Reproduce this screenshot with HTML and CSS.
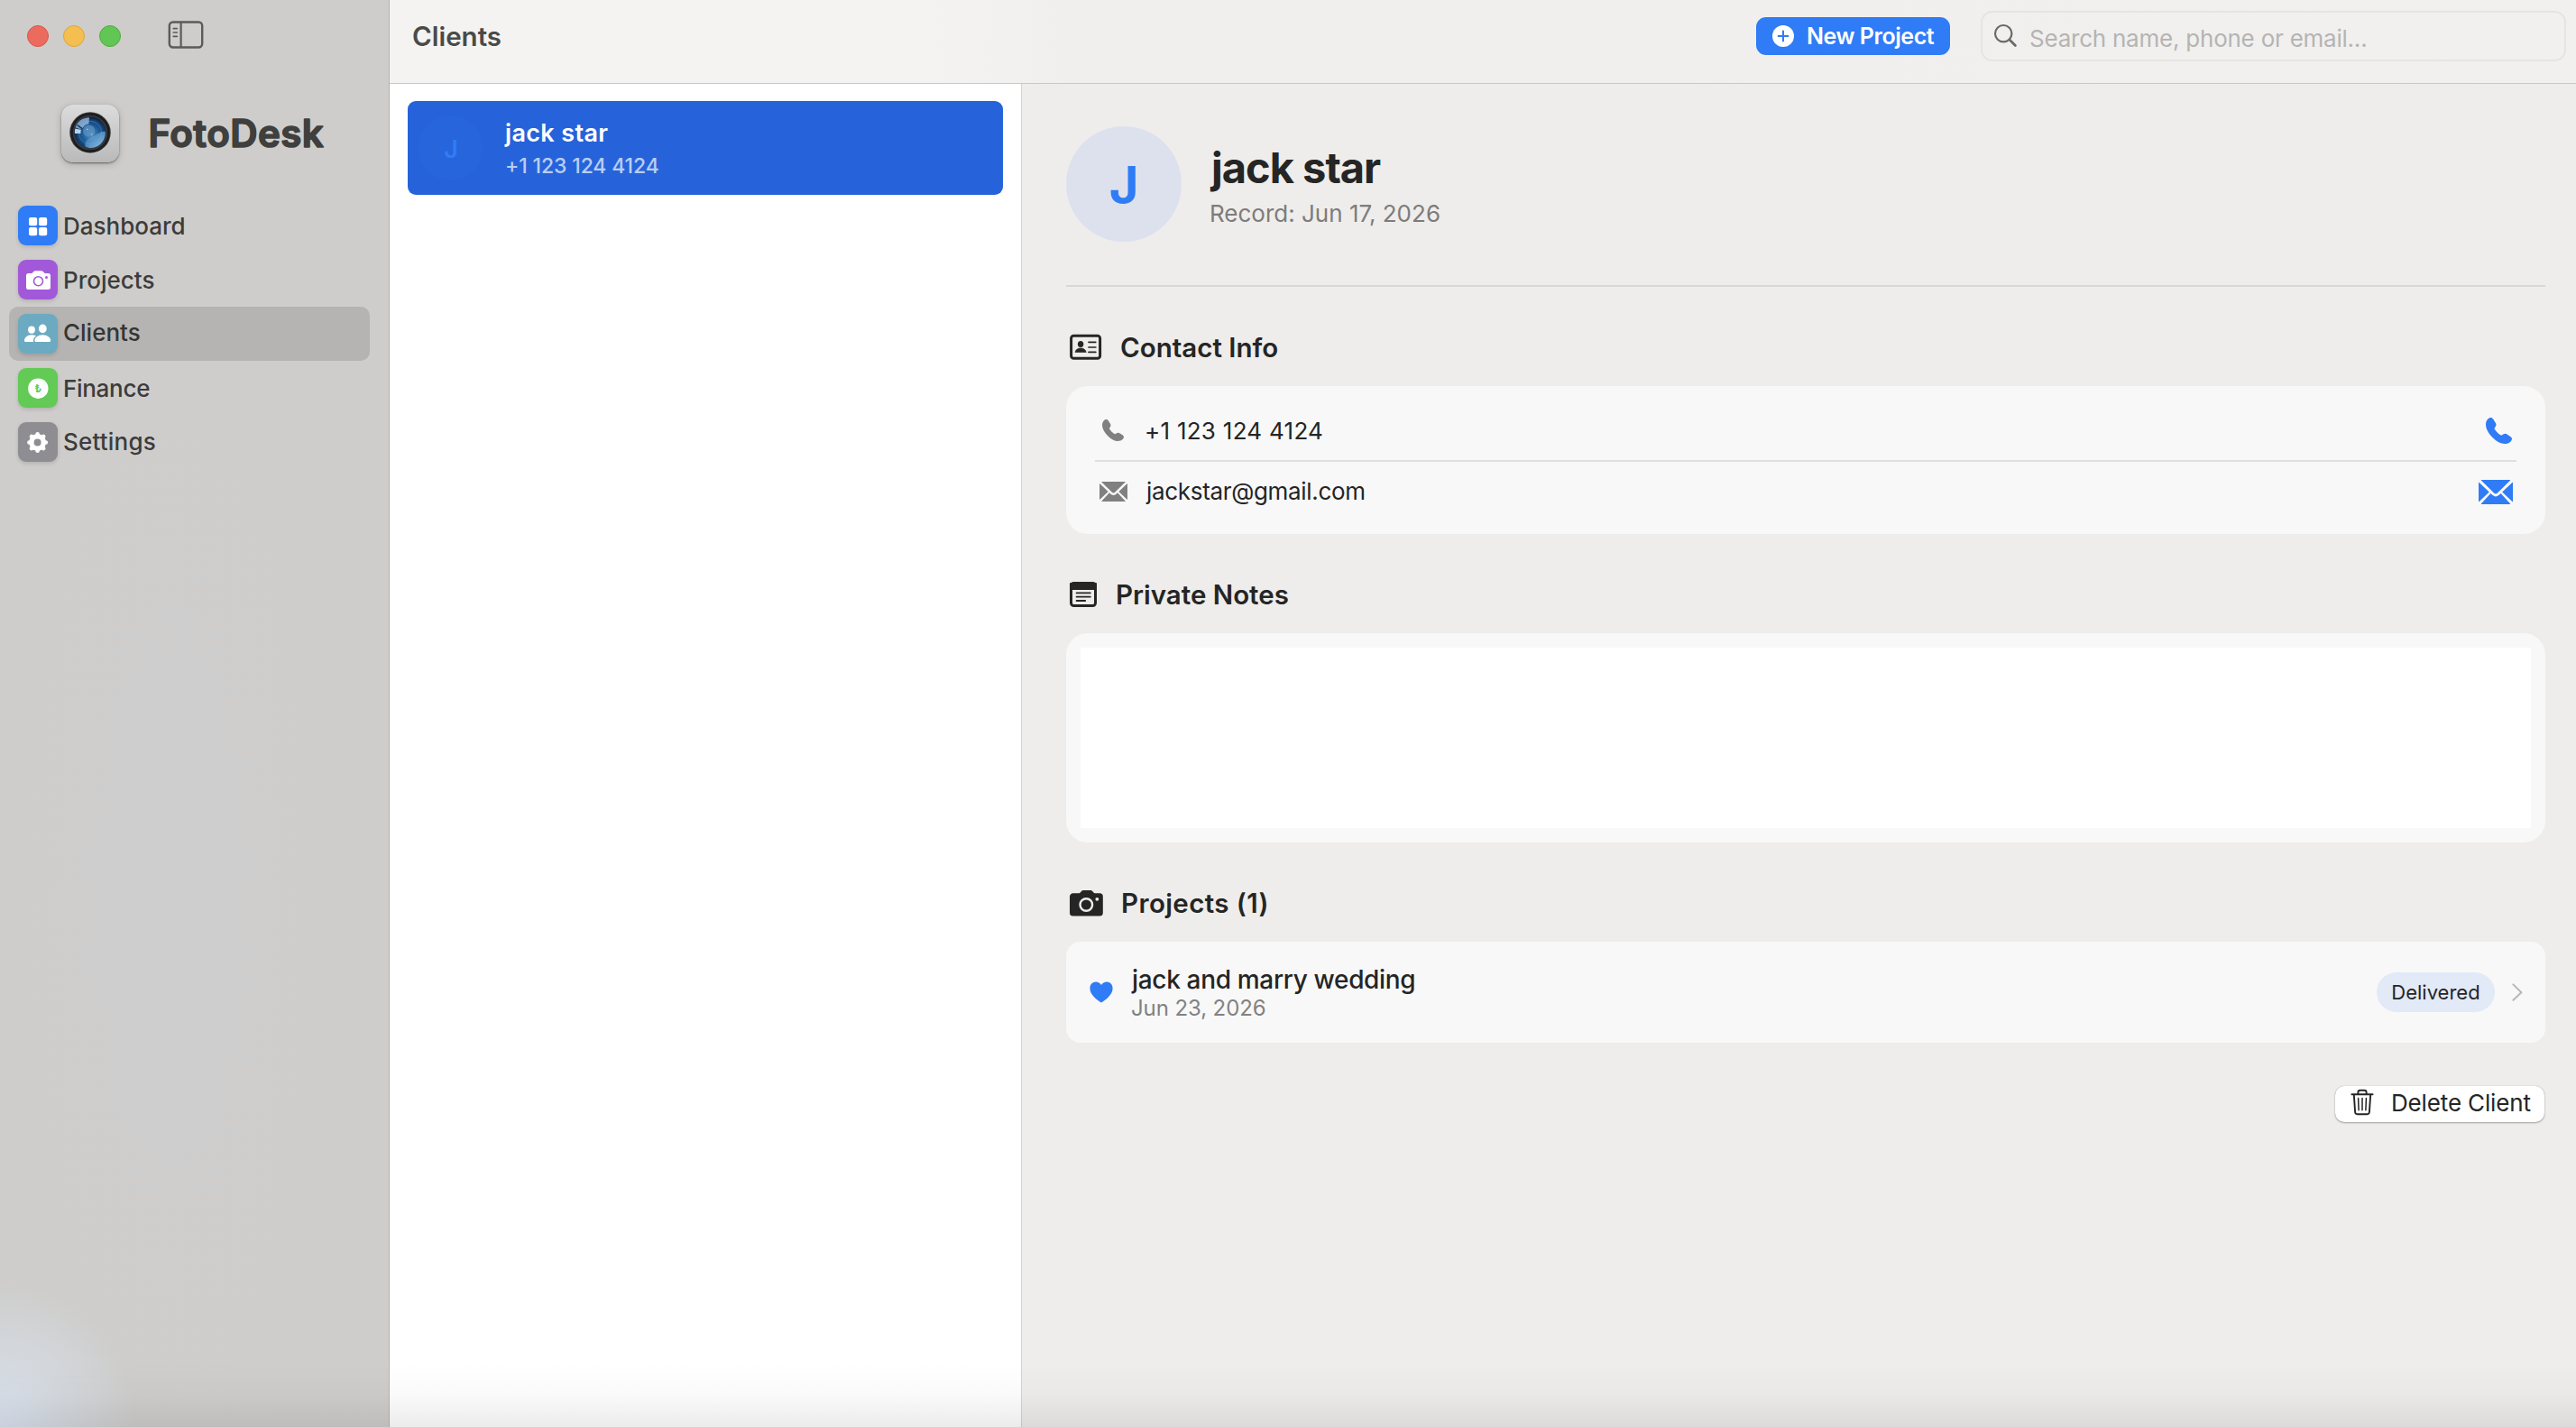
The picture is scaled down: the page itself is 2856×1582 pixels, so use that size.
FILE: index.html
```html
<!DOCTYPE html>
<html lang="en">
<head>
<meta charset="utf-8">
<title>FotoDesk</title>
<link rel="stylesheet" href="styles.css">
</head>
<body>
<div class="window">
  <aside class="sidebar">
    <div class="titlebar">
      <span class="light light-close"></span>
      <span class="light light-min"></span>
      <span class="light light-zoom"></span>
      <svg class="toggle" viewBox="0 0 40 32" width="40" height="32" fill="none" stroke="#5b5b5a" stroke-linecap="round">
        <rect x="1.8" y="1.5" width="36.4" height="28" rx="4" stroke-width="2.4"/>
        <path d="M14.6 2v27" stroke-width="2.2"/>
        <path d="M6.2 8.6h4.2M6.2 13h4.2M6.2 17.4h4.2" stroke-width="1.6"/>
      </svg>
    </div>
    <div class="brand">
      <svg class="brand-icon" viewBox="0 0 64 64" width="64" height="64">
        <defs>
          <linearGradient id="body" x1="0" y1="0" x2="0" y2="1"><stop offset="0" stop-color="#dcdcdc"/><stop offset="1" stop-color="#b9b9b9"/></linearGradient>
          <radialGradient id="lens" cx=".52" cy=".55" r=".55"><stop offset="0" stop-color="#4f93cc"/><stop offset=".5" stop-color="#1f5c98"/><stop offset=".8" stop-color="#123f70"/><stop offset="1" stop-color="#0a1c33"/></radialGradient>
          <linearGradient id="glow" x1="0" y1="0" x2="1" y2="1"><stop offset="0" stop-color="#4e8fc4" stop-opacity=".3"/><stop offset="1" stop-color="#a5d8f8"/></linearGradient>
        </defs>
        <rect width="64" height="64" rx="13" fill="url(#body)"/>
        <circle cx="32" cy="31.4" r="22.8" fill="#e4e4e4"/>
        <circle cx="32" cy="31" r="22.8" fill="#3a3a3b"/>
        <circle cx="32" cy="31" r="20.5" fill="none" stroke="#1c1c1e" stroke-width="2.4"/>
        <circle cx="32" cy="31" r="17.6" fill="url(#lens)"/>
        <circle cx="32" cy="31" r="12.6" fill="none" stroke="#3a78b0" stroke-width="1.2" opacity=".7"/>
        <path d="M15.600 25.400C18 18.400 23 14.600 31 14.200l-.6 7.200c-3.400.4-6 2.400-7.400 6Z" fill="#8fb4d8" opacity=".85"/>
        <path d="M15 32c-.4-2 0-4 .4-5.400l6.600 1.400c-.6 1.600-.6 2.600-.4 4Z" fill="#b8d2ea"/>
        <path d="M17.600 22.600l6 4.400" stroke="#14406c" stroke-width="1.600"/>
        <circle cx="30.600" cy="29" r="6.600" fill="#5c90be" opacity=".75"/>
        <path d="M48.800 30c.6 9-6 17.600-15.800 18-2.600 0-4.600-.6-6.600-1.800-1-6.800 4.400-9.400 9.400-11.400 4.400-1.800 7.600-6 13-4.800Z" fill="url(#glow)"/>
        <circle cx="28.800" cy="27.400" r=".9" fill="#d9a6c0"/><circle cx="34" cy="33" r=".8" fill="#a9cdf0"/>
      </svg>
      <svg class="brand-name" width="200" height="50"><text x="0.500" y="40.200">FotoDesk</text></svg>
    </div>
    <nav class="nav">
      <a class="nav-row nav-dashboard">
        <span class="tile"><svg viewBox="0 0 44 44"><g fill="#fff"><rect x="12" y="13" width="9.200" height="9.200" rx="2"/><rect x="23" y="13" width="9.200" height="9.200" rx="2"/><rect x="12" y="24" width="9.200" height="9.200" rx="2"/><rect x="23" y="24" width="9.200" height="9.200" rx="2"/></g></svg></span>
        <span class="nav-label">Dashboard</span>
      </a>
      <a class="nav-row nav-projects">
        <span class="tile"><svg viewBox="0 0 44 44"><path fill="#fff" d="M11.500 15h3.200c.8 0 1.200-.3 1.700-.9l.9-1c.5-.6 1-.9 1.900-.9h6.600c.9 0 1.400.3 1.900.9l.9 1c.5.6.9.9 1.700.9h3.200a2.500 2.500 0 0 1 2.500 2.500V30.500a2.500 2.500 0 0 1-2.500 2.500h-22a2.500 2.500 0 0 1-2.500-2.500V17.500a2.500 2.500 0 0 1 2.500-2.500Z"/><circle cx="22.500" cy="23.700" r="5" fill="none" stroke="#a259d9" stroke-width="1.600"/><circle cx="31.500" cy="19.500" r="1.500" fill="#a259d9"/></svg></span>
        <span class="nav-label">Projects</span>
      </a>
      <a class="nav-row nav-clients">
        <span class="tile"><svg viewBox="0 0 44 44" fill="#fff"><ellipse cx="15" cy="17.600" rx="3.900" ry="4.200"/><ellipse cx="27.300" cy="16.400" rx="4.400" ry="4.800"/><path d="M20 24.300c-1.500-.6-3.200-1-5-1-5 0-8 3.200-8 6.100 0 1 .6 1.700 1.800 1.700h8.300c-.6-2.600.5-5 2.900-6.800Z"/><path d="M27.300 23.300c5.300 0 8.900 3.400 8.900 6.300 0 .9-.6 1.500-1.700 1.500H20.100c-1.100 0-1.700-.6-1.700-1.500 0-2.900 3.600-6.300 8.900-6.300Z"/></svg></span>
        <span class="nav-label">Clients</span>
      </a>
      <a class="nav-row nav-finance">
        <span class="tile"><svg viewBox="0 0 44 44"><circle cx="22.300" cy="22.700" r="11.200" fill="#fff"/><text class="coin" x="22.300" y="27" text-anchor="middle">₺</text></svg></span>
        <span class="nav-label">Finance</span>
      </a>
      <a class="nav-row nav-settings">
        <span class="tile"><svg viewBox="0 0 44 44"><g transform="translate(21.600 22.500)"><circle r="6.700" fill="none" stroke="#fff" stroke-width="5.400"/><g stroke="#fff" stroke-width="4.600" stroke-linecap="round"><path d="M0-8.500V-9.200M0 8.500V9.200M8.500 0H9.200M-8.500 0H-9.200M6 6l.6.6M-6-6l-.6-.6M6-6l.6-.6M-6 6l-.6.6"/></g></g></svg></span>
        <span class="nav-label">Settings</span>
      </a>
    </nav>
  </aside>
  <main class="main">
    <header class="toolbar">
      <h1 class="toolbar-title">Clients</h1>
      <button class="new-project">
        <svg width="24" height="24" viewBox="0 0 24 24"><circle cx="12" cy="12" r="12" fill="#fff"/><path d="M12 6.600v10.800M6.600 12h10.800" stroke="#2f7cf6" stroke-width="2" stroke-linecap="round"/></svg>
        <span class="new-label">New Project</span>
      </button>
      <div class="search">
        <svg width="28" height="28" viewBox="0 0 28 28" fill="none" stroke="#6b6a69" stroke-linecap="round"><circle cx="11.200" cy="11.200" r="9.200" stroke-width="2.200"/><path d="M18 18l6.400 6.400" stroke-width="2.800"/></svg>
        <span class="search-label">Search name, phone or email...</span>
      </div>
    </header>
    <div class="panes">
      <section class="list">
        <article class="client">
          <span class="client-avatar">J</span>
          <div class="client-text">
            <span class="client-name">jack star</span>
            <span class="client-phone">+1 123 124 4124</span>
          </div>
        </article>
      </section>
      <section class="detail">
        <div class="profile">
          <span class="profile-avatar">J</span>
          <div class="profile-text">
            <h2 class="profile-name">jack star</h2>
            <span class="profile-record">Record: Jun 17, 2026</span>
          </div>
        </div>
        <hr class="rule">
        <h3 class="heading">
          <svg width="36" height="30" viewBox="0 0 36 30"><rect x="1.600" y="2.300" width="32" height="25" rx="2.800" fill="none" stroke="#252525" stroke-width="3"/><ellipse cx="12.100" cy="11.500" rx="3.200" ry="3.500" fill="#252525"/><path d="M6 20.500c.5-3 3-4.600 6.100-4.600s5.600 1.600 6.100 4.600Z" fill="#252525" stroke="#252525" stroke-width=".6" stroke-linejoin="round"/><path d="M21 9.300h7.800M21 15h7.800M21 20.400h7.800" stroke="#252525" stroke-width="1.700" stroke-linecap="round"/></svg>
          <span class="h-contact">Contact Info</span>
        </h3>
        <div class="card contact">
          <div class="contact-row">
            <span class="contact-icon"><svg width="24" height="24" viewBox="0 0 24 24"><use href="#phone"/></svg></span>
            <span class="contact-phone">+1 123 124 4124</span>
            <svg class="action-phone" width="29" height="29" viewBox="0 0 24 24"><use href="#phone"/></svg>
          </div>
          <div class="contact-row">
            <span class="contact-icon"><svg width="31" height="22" viewBox="0 0 38 27"><use href="#mail"/></svg></span>
            <span class="contact-mail">jackstar@gmail.com</span>
            <svg class="action-mail" width="38" height="27" viewBox="0 0 38 27"><use href="#mail"/></svg>
          </div>
        </div>
        <h3 class="heading">
          <svg width="31" height="30" viewBox="0 0 31 30"><rect x="1.500" y="2.500" width="27" height="25" rx="3" fill="none" stroke="#252525" stroke-width="3"/><path d="M1 3h28v6H1Z" fill="#252525" stroke="#252525" stroke-width="2" stroke-linejoin="round"/><path d="M7.600 13.400h15.200M7.600 17.700h15.200M7.600 22h9.600" stroke="#252525" stroke-width="1.800" stroke-linecap="round"/></svg>
          <span class="h-notes">Private Notes</span>
        </h3>
        <div class="card notes"><div class="notes-field"></div></div>
        <h3 class="heading">
          <svg width="37" height="30" viewBox="0 0 37 30"><path fill="#252525" d="M4 4.300h6c.9 0 1.300-.3 1.900-1l.9-1C13.500 1.500 14.300 1 15.500 1h7.200c1.200 0 2 .5 2.700 1.300l.9 1c.6.700 1 1 1.900 1h5a3.600 3.600 0 0 1 3.600 3.600V26a3.600 3.600 0 0 1-3.600 3.600H3.600A3.600 3.600 0 0 1 0 26V8a3.700 3.700 0 0 1 4-3.700Z"/><circle cx="18.300" cy="17" r="6.800" fill="none" stroke="#eeedeb" stroke-width="2.400"/><circle cx="30.300" cy="10.800" r="1.900" fill="#eeedeb"/></svg>
          <span class="h-projects">Projects (1)</span>
        </h3>
        <div class="card project">
          <svg class="heart" width="26" height="24" viewBox="0 0 26 24"><path fill="#2f7cf6" d="M13 23.600C9 21.200.4 15.200.4 7.800.4 3.600 3.200.6 6.900.6c2.600 0 4.800 1.300 6.100 3.500C14.300 1.900 16.500.6 19.100.6c3.700 0 6.500 3 6.500 7.200 0 7.400-8.600 13.400-12.600 15.800Z"/></svg>
          <div class="project-text">
            <span class="project-name">jack and marry wedding</span>
            <span class="project-date">Jun 23, 2026</span>
          </div>
          <span class="status"><span class="status-label">Delivered</span></span>
          <svg class="chevron" width="12" height="22" viewBox="0 0 12 22" fill="none" stroke="#b7b7b7" stroke-width="2" stroke-linecap="round" stroke-linejoin="round"><path d="M1.400 2.400l9 8.800-9 8.600"/></svg>
        </div>
        <button class="delete">
          <svg width="26" height="30" viewBox="0 0 26 30" fill="none" stroke="#252525" stroke-width="1.900" stroke-linecap="round" stroke-linejoin="round"><path d="M1.400 6.200h23.200M8.400 6V4c0-1.400.8-2.300 2.200-2.300h4.800c1.400 0 2.200.9 2.200 2.300v2M3.800 6.400l1.300 19.400c.1 1.500 1 2.400 2.500 2.400h10.800c1.500 0 2.400-.9 2.500-2.400l1.300-19.400"/><path d="M8.600 10.600l.5 13.200M13 10.600v13.200M17.400 10.600l-.5 13.200" stroke-width="1.500"/></svg>
          <span class="delete-label">Delete Client</span>
        </button>
      </section>
    </div>
  </main>
</div>
<svg class="symbols" aria-hidden="true">
  <symbol id="phone" viewBox="0 0 24 24"><path fill="currentColor" d="M17.300 24c2.200 0 3.900-.4 5.300-1.900.8-.8 1.400-1.800 1.400-2.600 0-.8-.4-1.300-1.200-1.900l-3-2.100c-1.300-.9-2.500-.9-3.500-.3l-1.700.9c-.4.200-.7.100-1.100-.1-2.300-1.500-4.200-3.500-5.400-5.500-.2-.4-.2-.7 0-1l1-1.600c.7-1.100.5-2.200-.3-3.400L6.700 1.300C6.100.5 5.500 0 4.600 0 3.600 0 2.600.5 1.800 1.400.5 2.800 0 4.300 0 6.200c0 3.900 2.400 8.300 6.200 12 3.600 3.600 7.500 5.800 11.100 5.800Z"/></symbol>
  <symbol id="mail" viewBox="0 0 38 27"><path fill="currentColor" d="M2.600.3C3 .1 3.500 0 4.200 0h29.600c.7 0 1.200.1 1.600.3L21 14.400c-1.300 1.200-2.700 1.200-4 0ZM.2 2.400C.1 2.800 0 3.300 0 4v19c0 .7.1 1.200.2 1.600L11.800 13.500ZM37.800 2.400c.1.400.2.900.2 1.600v19c0 .7-.1 1.200-.2 1.600L26.200 13.500ZM2.600 26.700c.4.200.9.300 1.600.3h29.600c.7 0 1.200-.1 1.600-.3L24.600 15l-2.300 2.100c-2.200 1.900-4.400 1.900-6.600 0L13.400 15Z"/></symbol>
</svg>
</body>
</html>
```
FILE: styles.css
```css
* { box-sizing: border-box; }
body { margin: 0; font-family: Inter, "Liberation Sans", sans-serif; color: #252525; }
h1, h2, h3 { margin: 0; }
button { font: inherit; border: 0; margin: 0; }
svg { display: block; flex: none; }
span { white-space: nowrap; }
.symbols { display: none; }

.window { position: relative; display: flex; width: 2856px; height: 1582px; overflow: hidden; }
.window::after {
  content: ""; position: absolute; left: 0; right: 0; bottom: 0; height: 72px; pointer-events: none;
  background: linear-gradient(to bottom, rgba(0,0,0,0), rgba(0,0,0,.02) 50%, rgba(0,0,0,.08));
}

/* Sidebar */
.sidebar {
  width: 432px; flex: none; border-right: 1px solid #b3b2b1;
  background:
    radial-gradient(ellipse 150px 160px at 0 100%, #dae3f0, rgba(208,216,228,0)),
    radial-gradient(ellipse 200px 700px at 190px 1000px, rgba(207,206,210,.5), rgba(206,205,207,0)),
    #cecdcb;
}
.titlebar { display: flex; align-items: center; height: 80px; padding-left: 30px; gap: 16px; }
.light { width: 24px; height: 24px; border-radius: 50%; border: 1px solid; }
.light-close { background: #ec6b5f; border-color: #d9564b; }
.light-min { background: #f4bf50; border-color: #dfa33c; }
.light-zoom { background: #62c655; border-color: #51ab43; }
.toggle { margin: -2px 0 0 36px; }
.brand { display: flex; align-items: center; height: 64px; margin-top: 36px; padding-left: 68px; gap: 32px; }
.brand-icon { border-radius: 13px; box-shadow: 0 1px 2px rgba(0,0,0,.45), 0 2px 8px rgba(0,0,0,.18); }
.brand-name { overflow: visible; }
.brand-name text { font-weight: 600; font-size: 42px; letter-spacing: .45px; fill: #3f3f3e; stroke: #3f3f3e; stroke-width: 1.600px; stroke-linejoin: round; }
.nav { margin-top: 40px; padding: 0 21px 0 10px; }
.nav-row { display: flex; align-items: center; height: 60px; padding-left: 10px; gap: 6px; border-radius: 10px; }
.nav-clients { background: #b5b4b2; }
.tile { width: 44px; height: 44px; border-radius: 9px; box-shadow: 0 2px 4px rgba(0,0,0,.13); }
.nav-dashboard .tile { background: #2f7cf6; }
.nav-projects .tile { background: #a259d9; }
.nav-clients .tile { background: #6caac1; }
.nav-finance .tile { background: #62ca55; }
.nav-settings .tile { background: #8e8d92; }
.coin { font-size: 12px; font-weight: 700; fill: #62ca55; }
.nav-label { font-size: 26px; font-weight: 500; line-height: 32px; color: #3c3c3b; padding-top: 2px; }
.nav-clients .nav-label { padding: 0 0 2px; color: #353534; }
.nav-finance .nav-label { letter-spacing: -.3px; }
.nav-settings .nav-label { padding: 0; letter-spacing: .2px; }

/* Toolbar */
.main { flex: 1; display: flex; flex-direction: column; }
.toolbar {
  display: flex; align-items: flex-start; height: 93px; padding: 12px 11px 0 25px;
  background: linear-gradient(to right, #f5f3f1, #f4f3f1 600px, #f0efed 760px, #f1f0ee);
  border-bottom: 1px solid #c9c8c7;
}
.toolbar-title { flex: 1; font-size: 29.500px; font-weight: 600; line-height: 36px; padding-top: 10px; color: #4a4a48; }
.new-project { display: flex; align-items: center; width: 215px; height: 42px; margin: 7px 34px 0 0; padding: 0 0 0 18px; gap: 14px; border-radius: 11px; background: #2f7cf6; color: #fff; }
.new-label { font-size: 25px; font-weight: 600; line-height: 30px; letter-spacing: -.45px; }
.search { display: flex; align-items: center; width: 649px; height: 56px; border: 2px solid #e5e4e2; border-radius: 13px; padding-left: 12px; gap: 12px; color: #b5b4b3; }
.search-label { font-size: 26px; line-height: 32px; padding-top: 5px; letter-spacing: -.23px; }

/* Client list */
.panes { flex: 1; display: flex; }
.list { width: 701px; flex: none; padding: 19px 20px; background: #fff; border-right: 1px solid #d3d3d3; }
.client { display: flex; align-items: center; height: 104px; padding-left: 12px; gap: 23px; border-radius: 9px; background: #2663da; }
.client-avatar { width: 72px; height: 72px; border-radius: 50%; background: #2765dc; color: #2f7cf6; font-size: 27px; font-weight: 600; line-height: 75px; text-align: center; }
.client-text { display: flex; flex-direction: column; padding: 4px 0 0 1px; }
.client-name { font-size: 27px; font-weight: 600; line-height: 36px; letter-spacing: .35px; color: #fff; }
.client-phone { font-size: 23px; line-height: 36px; font-weight: 500; letter-spacing: -.15px; color: #b9cdf4; }

/* Client detail */
.detail { flex: 1; display: flex; flex-direction: column; padding: 47px 34px 0 49px; background: #eeedeb; }
.profile { display: flex; align-items: center; height: 128px; gap: 31px; }
.profile-avatar { width: 128px; height: 128px; border-radius: 50%; background: #dce1ed; color: #2f7cf6; font-size: 56px; font-weight: 700; line-height: 131px; text-align: center; }
.profile-text { display: flex; flex-direction: column; padding-top: 5px; }
.profile-name { font-size: 47px; font-weight: 700; line-height: 60px; letter-spacing: -1px; padding-left: 2px; }
.profile-record { font-size: 26px; line-height: 42px; color: #7d7c7b; }
.rule { width: 100%; height: 2px; margin: 48px 0 49px; border: 0; background: #d8d7d5; }
.heading { display: flex; align-items: center; height: 36px; padding-left: 4px; gap: 20px; font-size: 29.500px; font-weight: 600; line-height: 36px; }
.h-projects { letter-spacing: .4px; }
.card { margin: 25px 0 49px; background: #f8f8f8; border-radius: 24px; }
.contact { height: 164px; padding: 16px 32px 0; }
.contact-row { display: flex; align-items: center; height: 66px; font-size: 26px; }
.contact-row + .contact-row { height: 68px; border-top: 2px solid #dfdfdf; }
.contact-icon { display: flex; justify-content: center; width: 40px; margin-right: 15px; color: #808080; }
.contact-phone, .contact-mail { flex: 1; line-height: 32px; }
.contact-phone { padding-top: 2px; letter-spacing: .27px; }
.contact-mail { padding-left: 2px; letter-spacing: -.32px; }
.action-phone, .action-mail { color: #2f7cf6; margin-right: 4px; }
.action-phone { margin-right: 5px; }
.notes { height: 232px; padding: 16px; }
.notes-field { height: 200px; background: #fff; }
.project { display: flex; align-items: center; height: 112px; margin-bottom: 48px; padding: 0 25px 0 26px; border-radius: 16px; }
.project-text { flex: 1; display: flex; flex-direction: column; margin-left: 20px; padding-top: 2px; }
.project-name { font-size: 28px; font-weight: 500; line-height: 34px; letter-spacing: -.33px; padding-left: 1px; }
.project-date { font-size: 24px; line-height: 30px; letter-spacing: -.1px; color: #828282; }
.status { width: 131px; height: 44px; border-radius: 22px; margin-right: 19px; background: #e2e9f7; text-align: center; line-height: 44px; font-size: 22px; }
.delete { display: flex; align-items: center; align-self: flex-end; width: 232px; height: 40px; padding: 0 0 0 17px; margin-right: 1px; gap: 19px; border-radius: 10px; background: #fff; color: #252525; box-shadow: 0 0 1px rgba(0,0,0,.35), 0 1px 2px rgba(0,0,0,.3); }
.delete svg { margin-top: -4px; }
.delete-label { font-size: 26px; line-height: 32px; padding-bottom: 2px; letter-spacing: -.15px; }
```
